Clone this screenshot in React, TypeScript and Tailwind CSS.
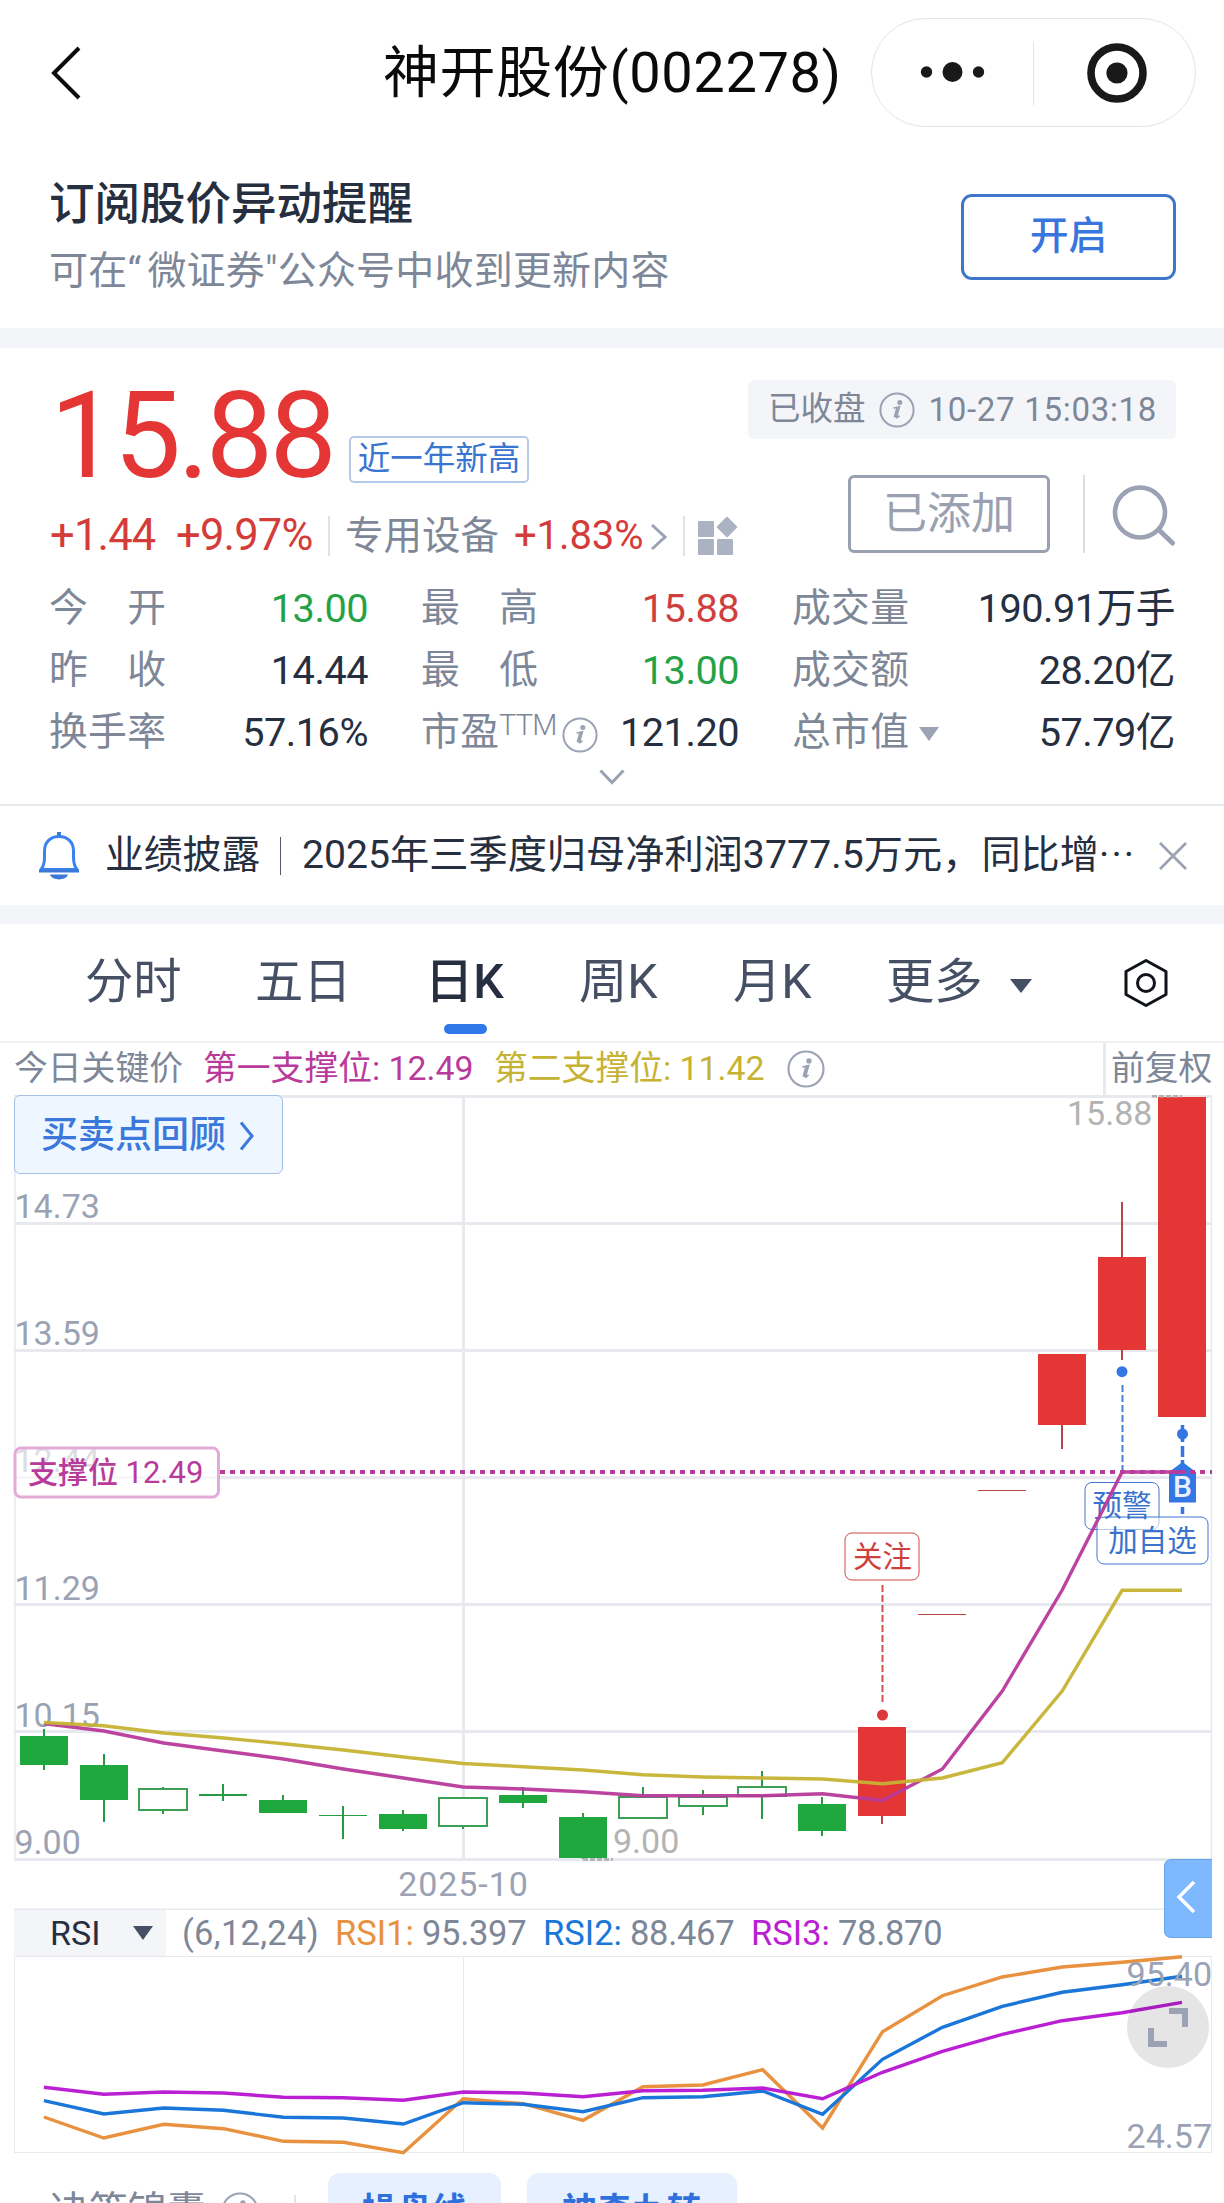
import { clsx } from "clsx";

type Candle = {
  kind: "down" | "hollow" | "up";
  top: number;
  bottom: number;
  high?: number;
  low?: number;
};

type Stat = {
  label: string[];
  value: string;
  tone?: "up" | "down";
  extra?: "ttm" | "caret";
};

const stats: Stat[] = [
  { label: ["今", "开"], value: "13.00", tone: "down" },
  { label: ["最", "高"], value: "15.88", tone: "up" },
  { label: ["成", "交", "量"], value: "190.91万手" },
  { label: ["昨", "收"], value: "14.44" },
  { label: ["最", "低"], value: "13.00", tone: "down" },
  { label: ["成", "交", "额"], value: "28.20亿" },
  { label: ["换", "手", "率"], value: "57.16%" },
  { label: ["市", "盈"], value: "121.20", extra: "ttm" },
  { label: ["总", "市", "值"], value: "57.79亿", extra: "caret" },
];

const candles: Candle[] = [
  { kind: "down", top: 1736, bottom: 1765, high: 1729, low: 1770 },
  { kind: "down", top: 1765, bottom: 1800, high: 1754, low: 1822 },
  { kind: "hollow", top: 1788, bottom: 1810, high: 1787, low: 1814 },
  { kind: "down", top: 1794, bottom: 1796, high: 1784, low: 1801 },
  { kind: "down", top: 1800, bottom: 1813, high: 1795 },
  { kind: "down", top: 1815, bottom: 1816, high: 1806, low: 1839 },
  { kind: "down", top: 1814, bottom: 1829, high: 1810, low: 1831 },
  { kind: "hollow", top: 1797, bottom: 1826, low: 1829 },
  { kind: "down", top: 1795, bottom: 1803, high: 1787, low: 1808 },
  { kind: "down", top: 1817, bottom: 1858, high: 1813, low: 1859 },
  { kind: "hollow", top: 1796, bottom: 1818, high: 1787 },
  { kind: "hollow", top: 1796, bottom: 1806, high: 1790, low: 1815 },
  { kind: "hollow", top: 1786, bottom: 1796, high: 1771, low: 1819 },
  { kind: "down", top: 1804, bottom: 1831, high: 1797, low: 1836 },
  { kind: "up", top: 1727, bottom: 1816, low: 1824 },
  { kind: "up", top: 1614, bottom: 1615 },
  { kind: "up", top: 1490, bottom: 1491 },
  { kind: "up", top: 1354, bottom: 1425, low: 1449 },
  { kind: "up", top: 1257, bottom: 1350, high: 1202, low: 1360 },
  { kind: "up", top: 1097, bottom: 1417 },
];

const firstSupport = [
  1723.5, 1731, 1743, 1751, 1759, 1769, 1778, 1787, 1789, 1791.7, 1795.7, 1795.7, 1795.7, 1793.7,
  1800.5, 1769, 1691, 1590, 1472, 1472,
];
const secondSupport = [
  1722.5, 1725.7, 1733, 1738, 1743.7, 1750, 1757, 1763.5, 1766.7, 1770, 1774.7, 1777, 1778, 1779,
  1783.7, 1778, 1762.7, 1691, 1590.3, 1590.3,
];
const rsi1 = [
  2117, 2138, 2124.3, 2128.7, 2141.3, 2142.3, 2152.7, 2098.7, 2103.7, 2120.3, 2086.7, 2085, 2069.7,
  2128, 2031.7, 1995.7, 1977, 1967, 1962.3, 1956.7,
];
const rsi2 = [
  2100.7, 2114, 2108, 2110.3, 2117.3, 2118, 2124, 2102.7, 2104.3, 2111.7, 2097.7, 2096.7, 2091,
  2114.3, 2059.3, 2027.3, 2006.3, 1992.3, 1984.7, 1976.3,
];
const rsi3 = [
  2087.3, 2094.3, 2092, 2093, 2097.3, 2097.7, 2100.3, 2092, 2093, 2096.7, 2090.7, 2090.3, 2088,
  2098.7, 2072.3, 2051.3, 2034.3, 2020.7, 2012.7, 2002.3,
];

const axisLabels = [
  { text: "14.73", y: 1218 },
  { text: "13.59", y: 1345 },
  { text: "12.44", y: 1472 },
  { text: "11.29", y: 1600 },
  { text: "10.15", y: 1727 },
  { text: "9.00", y: 1854 },
];

const gridLines = [1096.5, 1223.5, 1350.5, 1477.5, 1604.5, 1731.5, 1859.5];

const cx = (i: number) => 43.9 + i * 59.9;
const toPoints = (ys: number[]) => ys.map((y, i) => `${cx(i)},${y}`).join(" ");

function InfoIcon({ className }: { className?: string }) {
  return (
    <svg viewBox="0 0 36 36" className={clsx("shrink-0", className)}>
      <circle cx="18" cy="18" r="16.6" fill="none" stroke="#9AA2B3" strokeWidth="2" />
      <circle cx="20.8" cy="10.4" r="2.5" fill="#9AA2B3" />
      <path
        d="M14.6 16.2 C16.6 15.6 18.4 15 20.4 14.8 L17.4 25 C17.2 26 18.4 25.6 20.4 23.6"
        fill="none"
        stroke="#9AA2B3"
        strokeWidth="1.8"
      />
      <path d="M18.8 15.4 L16 25.4" stroke="#9AA2B3" strokeWidth="3" />
    </svg>
  );
}

function Header() {
  return (
    <header className="flex h-[145px] items-center">
      <svg viewBox="0 0 32 54" className="ml-[50px] h-[54px] w-8">
        <path d="M29 2 L4 27 L29 52" fill="none" stroke="#0c0c0c" strokeWidth="4" />
      </svg>
      <h1 className="ml-[301px] w-[488px] text-[56px] leading-none whitespace-nowrap text-[#0a0a0a] tracking-[0.6px]">
        神开股份(002278)
      </h1>
      <div className="flex h-[109px] w-[325px] items-center rounded-full border border-[#e4e4e4]">
        <svg viewBox="0 0 161 64" className="h-16 w-[161px]" fill="#191919">
          <circle cx="54.5" cy="31" r="5.7" />
          <circle cx="80.5" cy="31" r="10" />
          <circle cx="106.5" cy="31" r="5.7" />
        </svg>
        <span className="h-16 w-px bg-[#e4e4e4]" />
        <svg viewBox="0 0 161 64" className="h-16 w-[161px]">
          <circle cx="83" cy="32" r="26" fill="none" stroke="#191919" strokeWidth="7.6" />
          <circle cx="83" cy="32" r="10.6" fill="#191919" />
        </svg>
      </div>
    </header>
  );
}

function SubscribeBanner() {
  return (
    <section className="flex h-[183px] items-start justify-between pr-12 pl-[49px]">
      <div>
        <h2 className="mt-[37px] text-[45.5px] leading-none font-medium text-[#262f40]">订阅股价异动提醒</h2>
        <p className="mt-[24px] text-[39px] leading-none tracking-[0.2px] text-[#7e8798]">
          可在<span className="pr-1.5">“</span>微证券"公众号中收到更新内容
        </p>
      </div>
      <button
        type="button"
        className="mt-[49px] flex h-[86px] w-[215px] items-center justify-center rounded-[11px] border-3 border-[#3f75cb] pb-0.5 text-[38.5px] leading-none font-medium text-[#3875dc]"
      >
        开启
      </button>
    </section>
  );
}

function StatCell({ stat }: { stat: Stat }) {
  return (
    <div className="flex h-[62px] items-center justify-between pt-px">
      <div className="flex items-center">
        <div
          className={clsx(
            "flex justify-between text-[38.8px] leading-none text-[#7e8798]",
            stat.extra === "ttm" ? "w-[78px]" : "w-[117px]",
          )}
        >
          {stat.label.map((ch) => (
            <span key={ch}>{ch}</span>
          ))}
        </div>
        {stat.extra === "ttm" && (
          <>
            <span className="mb-3.5 w-[60px] text-[29px] leading-none font-light tracking-[-0.8px] text-[#7e8798]">TTM</span>
            <InfoIcon className="mt-1 ml-[3px] size-9" />
          </>
        )}
        {stat.extra === "caret" && (
          <svg viewBox="0 0 20 14" className="mt-1 ml-[10px] h-3.5 w-5">
            <path d="M0 0 H20 L10 14 Z" fill="#9AA2B3" />
          </svg>
        )}
      </div>
      <span
        className={clsx(
          "text-[39.7px] leading-none tracking-[-0.5px]",
          stat.tone === "up" && "text-[#cf3f3f]",
          stat.tone === "down" && "text-[#25a245]",
          !stat.tone && "text-[#262f40]",
        )}
      >
        {stat.value}
      </span>
    </div>
  );
}

function Quote() {
  return (
    <section className="h-[458px] border-b-2 border-[#e8e9ed]">
      <div className="flex h-[229px] justify-between pr-12 pl-[50px]">
        <div className="pt-[27px]">
          <div className="flex items-end">
            <span className="w-[299px] text-[120px] leading-[122px] tracking-[-3.6px] text-[#e43634]">15.88</span>
            <span className="mb-[14px] flex h-[47px] w-[180px] items-center justify-center rounded-[5px] border-2 border-[#b3cbe9] text-[32.5px] leading-none text-[#3a75d0]">
              近一年新高
            </span>
          </div>
          <div className="flex h-[78px] items-center leading-none text-[#d43c3a]">
            <span className="w-[126px] text-[43.5px] tracking-[-0.8px]">+1.44</span>
            <span className="w-[152px] text-[43.5px] tracking-[-0.8px]">+9.97%</span>
            <span className="h-10 w-0.5 bg-[#dfe2e8]" />
            <span className="ml-[15px] w-[169px] text-[38.5px] text-[#7e8798]">专用设备</span>
            <span className="w-[136px] text-[40px] tracking-[-0.1px]">+1.83%</span>
            <svg viewBox="0 0 18 28" className="mt-0.5 h-7 w-[18px]">
              <path d="M2 2 L15 14 L2 26" fill="none" stroke="#9AA2B3" strokeWidth="3" />
            </svg>
            <span className="ml-[15px] h-10 w-0.5 bg-[#dfe2e8]" />
            <svg viewBox="0 0 41 40" className="ml-3 h-10 w-[41px] shrink-0" fill="#ABB2C1">
              <rect x="1" y="5" width="16" height="16" rx="1" />
              <rect x="1" y="23" width="16" height="16" rx="1" />
              <rect x="20" y="23" width="16" height="16" rx="1" />
              <rect x="22.5" y="3.5" width="15" height="15" rx="1" transform="rotate(45 30 11)" />
            </svg>
          </div>
        </div>
        <div className="flex flex-col items-end pt-8">
          <div className="flex h-[59px] w-[428px] items-center rounded-[6px] bg-[#f4f5f9] pl-[20px] text-[32.5px] leading-none text-[#7e8798]">
            <span>已收盘</span>
            <InfoIcon className="mr-[14px] ml-[13px] size-9" />
            <span className="text-[33px] whitespace-nowrap tracking-[0.7px]">10-27 15:03:18</span>
          </div>
          <div className="mt-9 flex h-[78px]">
            <button
              type="button"
              className="flex w-[202px] items-center justify-center rounded-[6px] border-3 border-[#99a1b1] text-[44px] leading-none text-[#99a1b1]"
            >
              已添加
            </button>
            <span className="ml-[33px] w-0.5 bg-[#dcdcdf]" />
            <svg viewBox="0 0 64 64" className="mt-[7px] ml-[27px] size-16">
              <circle cx="28" cy="30.5" r="25" fill="none" stroke="#9AA2B3" strokeWidth="4.6" />
              <path d="M47 48 L60.5 61" stroke="#9AA2B3" strokeWidth="5" strokeLinecap="round" />
            </svg>
          </div>
        </div>
      </div>
      <div className="grid grid-cols-[319px_318px_383px] gap-x-[53px] pl-[49px]">
        {stats.map((stat) => (
          <StatCell key={stat.label.join("")} stat={stat} />
        ))}
      </div>
      <svg viewBox="0 0 26 16" className="mx-auto mt-[6px] h-4 w-[26px]">
        <path d="M1.5 1.5 L13 13.5 L24.5 1.5" fill="none" stroke="#9AA2B3" strokeWidth="3" />
      </svg>
    </section>
  );
}

function NewsBar() {
  return (
    <section className="flex h-[99px] items-center text-[39.2px] leading-none whitespace-nowrap text-[#262f40]">
      <svg viewBox="0 0 44 50" className="ml-[37px] h-[50px] w-11 shrink-0">
        <path d="M22 1 V6" stroke="#3b78d8" strokeWidth="4" />
        <path
          d="M4 38.5 C7 35 7.5 32 7.5 26 V20 C7.5 11 13.5 5.5 22 5.5 S36.5 11 36.5 20 V26 C36.5 32 37 35 40 38.5 Z"
          fill="none"
          stroke="#3b82ee"
          strokeWidth="3"
          strokeLinejoin="round"
        />
        <path d="M2 40 H42" stroke="#3b78d8" strokeWidth="3" />
        <path d="M13 43.5 H31 C29 50 15 50 13 43.5 Z" fill="#3b78d8" />
      </svg>
      <span className="ml-[24px] w-[157px] text-[38.8px]">业绩披露</span>
      <span className="ml-[18px] h-[38px] w-px bg-[#50586a]" />
      <span className="ml-[21px] w-[838px]">
        2025年三季度归母净利润<span className="tracking-[0.1px]">3777.5</span>万元，同比增
        <span className="tracking-[2.2px]">···</span>
      </span>
      <svg viewBox="0 0 30 30" className="ml-[18px] size-[30px] shrink-0">
        <path d="M2 2 L28 28 M28 2 L2 28" stroke="#9AA2B3" strokeWidth="2.8" />
      </svg>
    </section>
  );
}

function PeriodTabs() {
  return (
    <nav className="flex h-[119px] items-center border-b-2 border-[#f0f0f3] pl-[85px] text-[48.3px] leading-none whitespace-nowrap text-[#465064]">
      <span className="w-[170px]">分时</span>
      <span className="w-[170px]">五日</span>
      <span className="relative w-[154px] font-medium text-[#262f40]">
        日K
        <i className="absolute top-[66px] left-[19px] h-2.5 w-[43px] rounded-full bg-[#2f78ea]" />
      </span>
      <span className="w-[154px]">周K</span>
      <span className="w-[153px]">月K</span>
      <span className="w-[124px]">更多</span>
      <svg viewBox="0 0 22 14" className="mt-1.5 h-3.5 w-[22px]">
        <path d="M0 0 H22 L11 14 Z" fill="#465064" />
      </svg>
      <svg viewBox="0 0 46 50" className="ml-[91px] h-[50px] w-[46px]" fill="none" stroke="#10131a" strokeWidth="3">
        <path d="M23 2.5 L43 13.5 V36.5 L23 47.5 L3 36.5 V13.5 Z" strokeLinejoin="round" />
        <circle cx="23" cy="25" r="8.5" />
      </svg>
    </nav>
  );
}

function KeyPriceRow() {
  return (
    <div className="flex h-[52px] items-center pl-[14px] text-[33.8px] leading-none whitespace-nowrap">
      <span className="w-[189px] text-[#7e8798]">今日关键价</span>
      <span className="w-[291px] text-[#b83a9b]">第一支撑位: 12.49</span>
      <span className="w-[293px] text-[#c6b233]">第二支撑位: 11.42</span>
      <InfoIcon className="size-[38px]" />
      <div className="ml-auto flex h-full w-[121px] items-center border-l-3 border-[#e8e9ef] pl-[5px] text-[#7e8798]">
        前复权
      </div>
    </div>
  );
}

function CandleShape({ candle, x }: { candle: Candle; x: number }) {
  const { kind, top, bottom, high = top, low = bottom } = candle;
  const color = kind === "up" ? "#E43634" : "#1FA83D";
  const wick = kind === "up" ? "#B84848" : "#279A43";
  return (
    <g>
      {high < top && <path d={`M${x} ${high} V${top}`} stroke={wick} strokeWidth="2" />}
      {low > bottom && <path d={`M${x} ${bottom} V${low}`} stroke={wick} strokeWidth="2" />}
      {kind === "hollow" ? (
        <rect x={x - 24} y={top + 1} width="48" height={bottom - top - 1} fill="#fff" stroke="#3DA056" strokeWidth="2" />
      ) : (
        <rect x={x - 24} y={top} width="48" height={bottom - top} fill={bottom - top < 3 ? wick : color} />
      )}
    </g>
  );
}

function KLineChart() {
  return (
    <div className="relative h-[815px]">
      <svg viewBox="0 1095 1224 815" className="h-[815px] w-[1224px]">
        <g stroke="#E8E9EF" strokeWidth="3">
          {gridLines.map((y) => (
            <path key={y} d={`M14 ${y} H1212`} />
          ))}
          <path d="M463.5 1096 V1860" />
          <path d="M15 1096 V1861 M1211.5 1096 V1861" strokeWidth="1.5" />
        </g>
        <path d="M14 1909.5 H1212" stroke="#E8E9ED" strokeWidth="2" />
        {candles.map((candle, i) => (
          <CandleShape key={i} candle={candle} x={Math.round(cx(i) - 0.3)} />
        ))}

        <g fill="#9AA2B3" fontSize="34">
          {axisLabels.map((label) => (
            <text key={label.text} x="14.5" y={label.y}>
              {label.text}
            </text>
          ))}
          <text x="463.5" y="1896" textAnchor="middle" letterSpacing="0.9">
            2025-10
          </text>
        </g>
        <g fill="#B3B3B3" fontSize="34">
          <text x="1067" y="1125">15.88</text>
          <text x="613" y="1853">9.00</text>
        </g>
        <path d="M1152 1096 H1182 M583 1859.5 H613" stroke="#B3B3B3" strokeWidth="3" strokeDasharray="5 2" />

        {/* signal markers */}
        <path d="M1122.5 1385 V1470" stroke="#4A80D4" strokeWidth="2" strokeDasharray="7 3" />
        <circle cx="1122" cy="1371.7" r="5.5" fill="#3277E3" />
        <path
          d="M1182.5 1425 V1442 M1182.5 1446 V1457 M1182.5 1460 V1466 M1182.5 1507 V1514"
          stroke="#3277E3"
          strokeWidth="3.5"
        />
        <circle cx="1182.5" cy="1434" r="5.5" fill="#3277E3" />
        <path d="M882.5 1585 V1704" stroke="#D4504E" strokeWidth="2" strokeDasharray="7 3" />
        <circle cx="882.5" cy="1715" r="5.5" fill="#DB3A38" />
        <g fill="#fff" fillOpacity="0.6">
          <rect x="845" y="1533" width="74" height="47" rx="7" stroke="#CC4947" />
          <rect x="1085" y="1482.5" width="74" height="47" rx="7" stroke="#3F75CB" />
          <rect x="1097" y="1517" width="111" height="47" rx="7" stroke="#3F75CB" />
        </g>
        <g fontSize="29.5" textAnchor="middle" fill="#3A72CC">
          <text x="882.5" y="1567" fill="#CF3F3D">关注</text>
          <text x="1122" y="1516">预警</text>
          <text x="1152.5" y="1551">加自选</text>
        </g>

        <path d="M1169 1502.5 V1472 L1182.5 1462 L1196 1472 V1502.5 Z" fill="#3277E3" />
        <text x="1182.5" y="1497" fontSize="30" fontWeight="500" textAnchor="middle" fill="#E8F1FF">
          B
        </text>

        <path d="M220 1472 H1212" stroke="#B83A9B" strokeWidth="4" strokeDasharray="5 5" />
        <g fill="none" strokeWidth="3.4">
          <polyline points={toPoints(firstSupport)} stroke="#B83A9B" strokeOpacity="0.95" />
          <polyline points={toPoints(secondSupport)} stroke="#C6B233" strokeOpacity="0.95" />
        </g>

        <rect x="15" y="1448" width="203.5" height="49" rx="6" fill="#fff" fillOpacity="0.65" stroke="#E2ABD7" strokeWidth="3" />
        <text x="28" y="1483" fontSize="30" fontWeight="500" fill="#B83A9B">
          支撑位{" "}
          <tspan fontSize="31" fontWeight="400">
            12.49
          </tspan>
        </text>
      </svg>
      <button
        type="button"
        className="absolute top-0 left-[14px] flex h-[79px] w-[269px] items-center rounded-[6px] border border-[#a4c0e2] bg-[#eef6ff] pt-0.5 pl-[26px] text-[37px] leading-none font-medium text-[#3a78dc]"
      >
        买卖点回顾
        <svg viewBox="0 0 16 30" className="ml-[13px] h-[30px] w-4">
          <path d="M2 1.5 L13 15 L2 28.5" fill="none" stroke="#3a78dc" strokeWidth="3" />
        </svg>
      </button>
      <div className="absolute top-[764px] right-3 z-10 flex h-[79px] w-12 items-center justify-center rounded-l-[7px] border border-r-0 border-[#68a4ea] bg-[#7eb9ff] pr-1.5 pb-1">
        <svg viewBox="0 0 20 34" className="h-[34px] w-5">
          <path d="M18 2 L3 17 L18 32" fill="none" stroke="#fff" strokeWidth="3.5" />
        </svg>
      </div>
    </div>
  );
}

function RsiPanel() {
  return (
    <div>
      <div className="flex h-[46px] items-center pl-[14px] text-[34.5px] leading-none whitespace-nowrap text-[#7e8798]">
        <div className="flex h-full w-[152px] items-center bg-[#f4f5f9] pl-[36px] text-[#262f40]">
          <span className="w-[83px] text-[34px]">RSI</span>
          <svg viewBox="0 0 20 14" className="h-3.5 w-5">
            <path d="M0 0 H20 L10 14 Z" fill="#465064" />
          </svg>
        </div>
        <span className="ml-4 w-[153px] tracking-[0.3px]">(6,12,24)</span>
        <span className="w-[87px] text-[#e8913f]">RSI1:</span>
        <span className="w-[121px] tracking-[-0.3px]">95.397</span>
        <span className="w-[87px] text-[#1a76d8]">RSI2:</span>
        <span className="w-[121px] tracking-[-0.3px]">88.467</span>
        <span className="w-[87px] text-[#bb1fd4]">RSI3:</span>
        <span className="tracking-[-0.3px]">78.870</span>
      </div>
      <svg viewBox="0 1956 1224 199" className="h-[199px] w-[1224px] overflow-visible">
        <path d="M14.5 1956.5 H1211.5 V2152.5 H14.5 Z M463.5 1956.5 V2152.5" fill="none" stroke="#E8E9ED" />
        <g fill="none" strokeWidth="3.4">
          <polyline points={toPoints(rsi1)} stroke="#E8913F" />
          <polyline points={toPoints(rsi2)} stroke="#1A76D8" />
          <polyline points={toPoints(rsi3)} stroke="#BB1FD4" />
        </g>
        <g fill="#9AA2B3" fontSize="34" textAnchor="end">
          <text x="1212" y="1986">95.40</text>
          <text x="1212" y="2148">24.57</text>
        </g>
        <circle cx="1168" cy="2027" r="41" fill="#000" fillOpacity="0.1" />
        <path d="M1169 2011 H1185 V2027 M1151 2028 V2044 H1167" fill="none" stroke="#9AA2B3" strokeWidth="6" />
      </svg>
    </div>
  );
}

function Strategy() {
  return (
    <div className="flex items-center pt-[18px] pl-[50px] leading-none whitespace-nowrap">
      <span className="w-[171px] text-[39px] text-[#7e8798]">决策锦囊</span>
      <InfoIcon className="size-[38px]" />
      <span className="ml-[35px] h-8 w-0.5 bg-[#e2e4ea]" />
      <div className="ml-8 flex gap-[26px] text-[35px] font-bold text-[#2f70dc]">
        <span className="flex h-[76px] w-[173px] items-center justify-center rounded-[12px] bg-[#e7f0fe]">操盘线</span>
        <span className="flex h-[76px] w-[210px] items-center justify-center rounded-[12px] bg-[#e7f0fe]">神奇九转</span>
      </div>
    </div>
  );
}

export default function App() {
  return (
    <main className="h-[2203px] w-[1224px] overflow-hidden bg-white font-[Roboto,'Noto_Sans_CJK_SC',sans-serif]">
      <Header />
      <SubscribeBanner />
      <div className="h-[20px] bg-[#f4f5f9]" />
      <Quote />
      <NewsBar />
      <div className="h-[19px] bg-[#f4f5f9]" />
      <PeriodTabs />
      <KeyPriceRow />
      <KLineChart />
      <RsiPanel />
      <Strategy />
    </main>
  );
}
